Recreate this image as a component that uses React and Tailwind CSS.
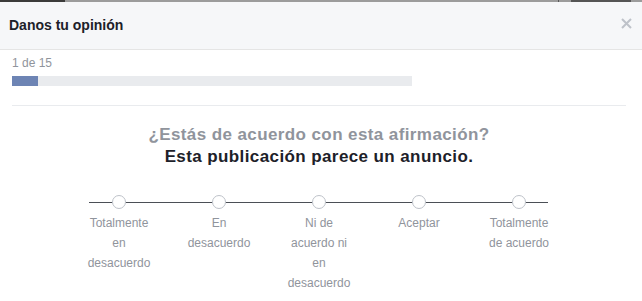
const options = [
  "Totalmente en desacuerdo",
  "En desacuerdo",
  "Ni de acuerdo ni en desacuerdo",
  "Aceptar",
  "Totalmente de acuerdo",
];

export default function App() {
  return (
    <div className="w-[642px] h-[301px] overflow-hidden bg-white font-['Liberation_Sans',Arial,sans-serif]">
      {/* backdrop sliver above the dialog */}
      <div className="h-[2px] flex bg-[#9c9c9c]">
        <div className="w-[65px] bg-[#3b3b3b]" />
        <div className="w-[493px]" />
        <div className="w-px bg-[#5a5a5a]" />
        <div className="w-[12px]" />
        <div className="w-[60px] bg-[#555]" />
      </div>

      <div className="h-[48px] bg-[#f6f7f9] border-b border-[#e5e5e5] flex items-center justify-between pl-[9px] pr-[10px]">
        <div className="text-[14px] font-bold text-[#1d2129]">Danos tu opinión</div>
        <svg width="11" height="11" viewBox="0 0 11 11" className="mb-[4px]">
          <path d="M1 1 L10 10 M10 1 L1 10" stroke="#bec2c9" strokeWidth="2" />
        </svg>
      </div>

      <div className="pl-[12px] pr-[16px] pt-[5px]">
        <div className="text-[12px] leading-[16px] text-[#90949c]">1 de 15</div>
        <div className="mt-[5px] w-[400px] h-[10px] bg-[#e9ebee]">
          <div className="h-full w-[26px] bg-[#6d84b4]" />
        </div>
        <div className="mt-[19px] h-px bg-[#e9ebee]" />

        <div className="mt-[18px] text-center text-[17px] tracking-[0.4px] font-bold leading-[22px]">
          <div className="text-[#90949c]">¿Estás de acuerdo con esta afirmación?</div>
          <div className="text-[#1d2129]">Esta publicación parece un anuncio.</div>
        </div>

        <div className="mt-[27px] mx-auto w-[500px] relative">
          <div className="absolute left-[20px] right-[21px] top-[7px] h-px bg-[#4b4f56]" />
          <div className="grid grid-cols-5">
            {options.map((o) => (
              <div key={o} className="flex flex-col items-center">
                <div className="relative w-[14px] h-[14px] rounded-full border border-[#bec2c9] bg-white" />
                <div className="mt-[4px] w-[70px] text-center text-[12px] leading-[20px] text-[#90949c]">
                  {o}
                </div>
              </div>
            ))}
          </div>
        </div>
      </div>
    </div>
  );
}
